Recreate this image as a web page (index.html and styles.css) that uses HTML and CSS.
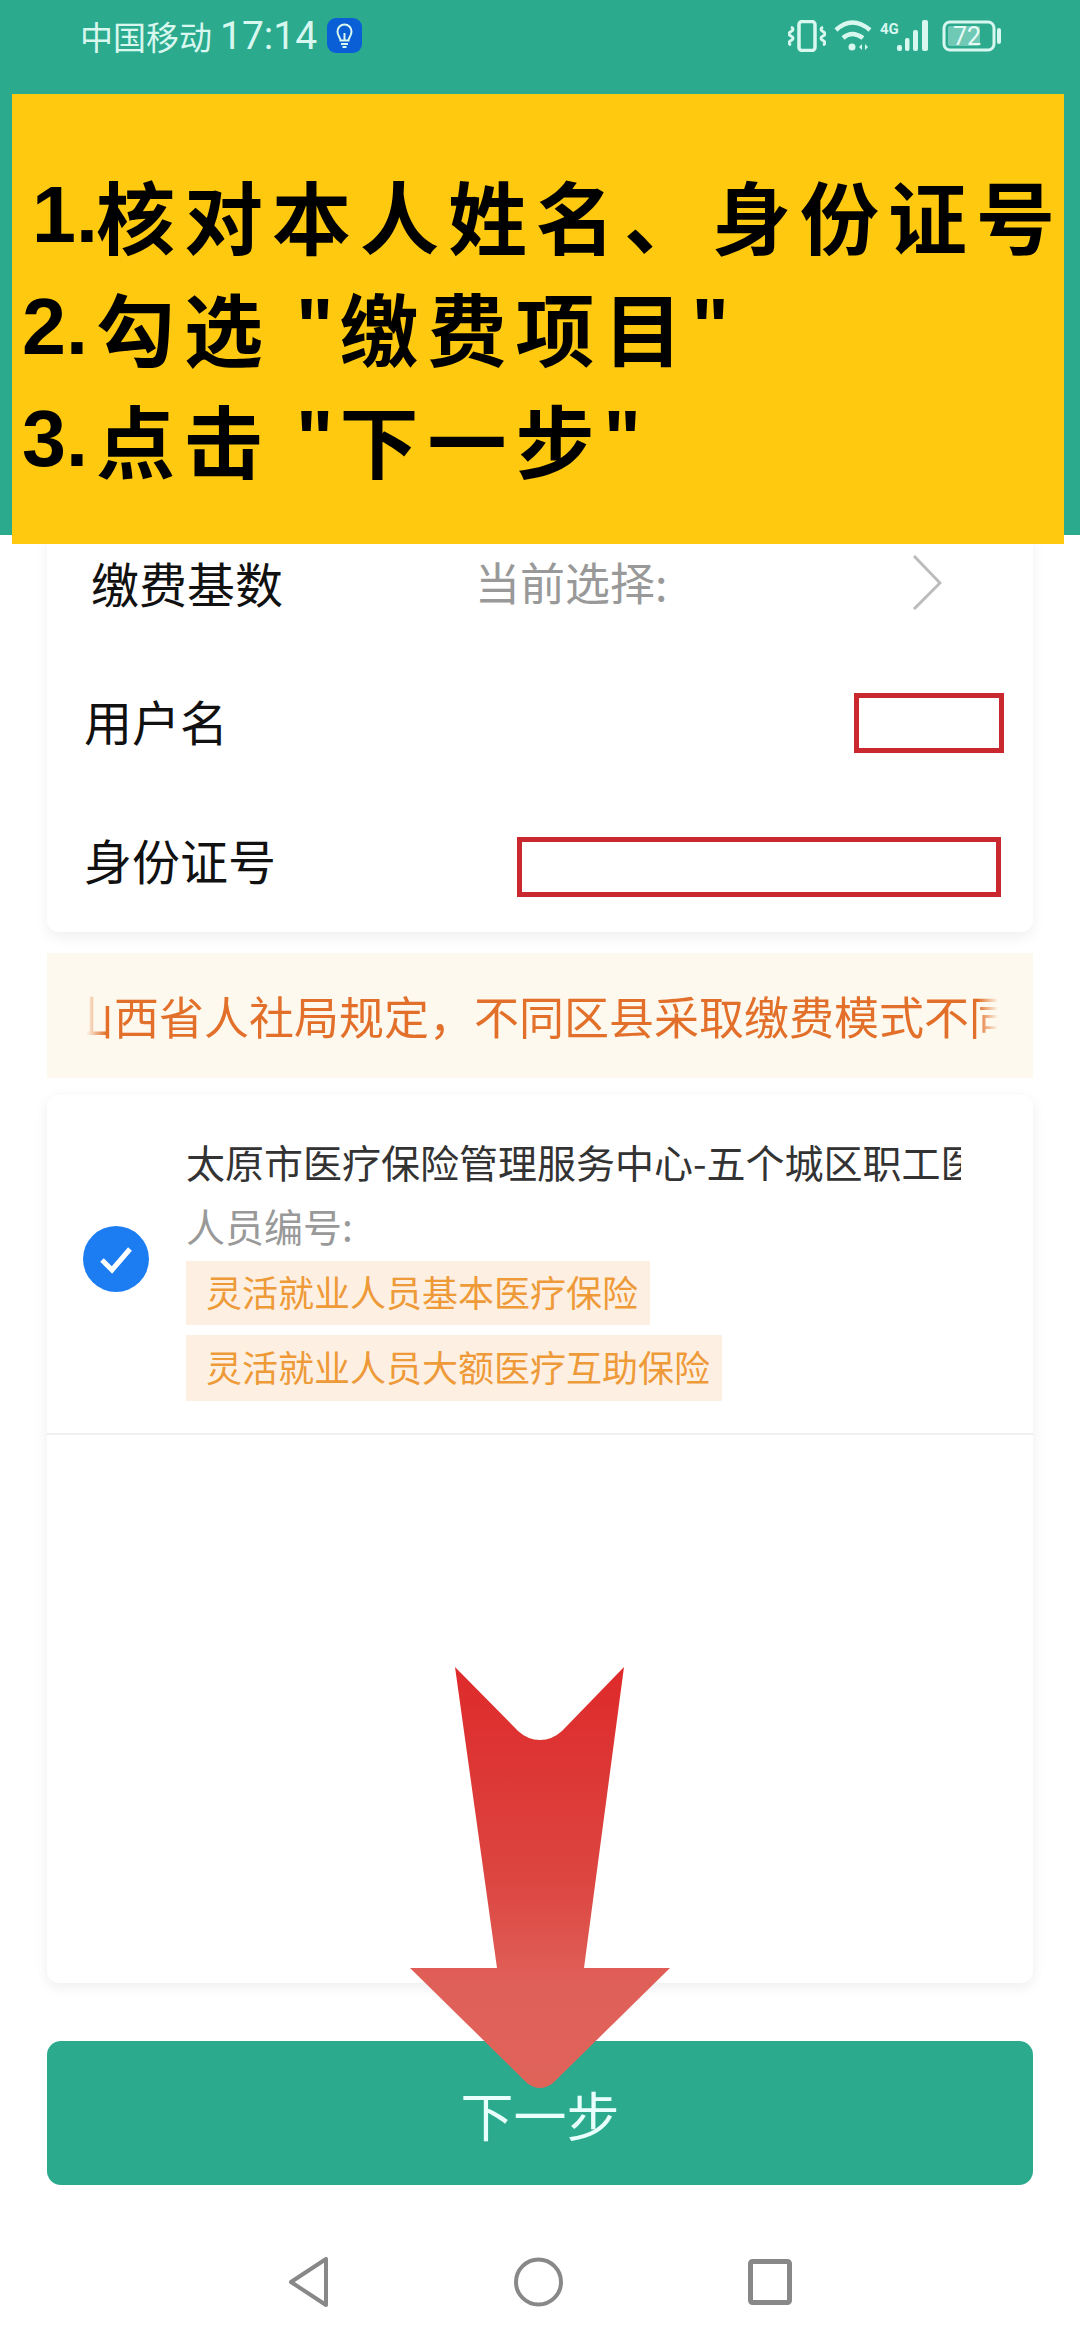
FILE: index.html
```html
<!DOCTYPE html>
<html>
	<head>
		<meta charset="UTF-8">
		<title>缴费</title>
		<link rel="stylesheet" href="styles.css">
	</head>
	<body>
		<div class="page">
			<div class="header">
				<div class="status_bar">
					<div class="status_left">
						<span class="carrier">中国移动</span>
						<span class="clock">17:14</span>
						<svg class="bulb" width="35" height="35" viewBox="0 0 35 35">
							<rect width="35" height="35" rx="9" fill="#0b5fd6"/>
							<path d="M13.5 22.5c0-3-3-4.500-3-9a7 7 0 0 1 14 0c0 4.500-3 6-3 9z" fill="none" stroke="#d8f7ee" stroke-width="2"/>
							<path d="M14 26h7M15.500 29h4M17.500 22v-7" fill="none" stroke="#d8f7ee" stroke-width="2"/>
						</svg>
					</div>
					<div class="status_right">
						<svg width="38" height="32" viewBox="0 0 38 32" fill="none" stroke="#d8f7ee">
							<rect x="11" y="1.500" width="16" height="29" rx="3" stroke-width="3.500"/>
							<path d="M3 7q4 2 0 4.500t0 4.500q4 2 0 4.500t0 4.500M35 7q-4 2 0 4.500t0 4.500q-4 2 0 4.500t0 4.500" stroke-width="3"/>
						</svg>
						<svg width="38" height="32" viewBox="0 0 38 32" fill="none" stroke="#d8f7ee">
							<path d="M2 10q16-15 34 0M9 18q9-8 20 0" stroke-width="4.500"/>
							<circle cx="18" cy="27" r="3.500" fill="#d8f7ee" stroke="none"/>
							<path d="M28 24v6l-3-3zM31 24v6l3-3z" fill="#d8f7ee" stroke="none"/>
						</svg>
						<svg width="50" height="32" viewBox="0 0 50 32" fill="#d8f7ee">
							<text class="net_type" x="0" y="14">4G</text>
							<rect x="17" y="25" width="5" height="6" rx="2"/>
							<rect x="25" y="18" width="4.500" height="13" rx="2"/>
							<rect x="33" y="10" width="5" height="21" rx="2"/>
							<rect x="42" y="0" width="6" height="31" rx="2"/>
						</svg>
						<svg class="battery" width="59" height="32" viewBox="0 0 59 32">
							<rect x="2" y="2" width="50" height="28" rx="6" fill="none" stroke="#d8f7ee" stroke-width="3"/>
							<rect x="6" y="6" width="32" height="20" rx="2" fill="#d8f7ee" opacity=".4"/>
							<rect x="55" y="8" width="4" height="16" rx="2" fill="#d8f7ee"/>
							<text class="battery_num" x="25" y="25" text-anchor="middle">72</text>
						</svg>
					</div>
				</div>
			</div>

			<div class="main">
				<div class="info_card">
					<div class="info_row info_row_base">
						<span class="label">缴费基数</span>
						<span class="current">当前选择:</span>
						<svg class="chevron" width="30" height="55" viewBox="0 0 30 55">
							<path d="M2 1l26 27L2 54" fill="none" stroke="#bcbcbc" stroke-width="3"/>
						</svg>
					</div>
					<div class="info_row info_row_user">
						<span class="label">用户名</span>
						<div class="redact redact_name"></div>
					</div>
					<div class="info_row info_row_id">
						<span class="label">身份证号</span>
						<div class="redact redact_id"></div>
					</div>
				</div>

				<div class="notice">
					<div class="notice_scroll"><span>山西省人社局规定，不同区县采取缴费模式不同</span></div>
				</div>

				<div class="list_card">
					<div class="list_item">
						<svg class="check" width="66" height="66" viewBox="0 0 66 66">
							<circle cx="33" cy="33" r="33" fill="#1c7cf2"/>
							<path d="M19 34l10 10 18-21" fill="none" stroke="#fff" stroke-width="5"/>
						</svg>
						<div class="item_body">
							<div class="item_title">太原市医疗保险管理服务中心-五个城区职工医疗保险</div>
							<div class="item_no">人员编号:</div>
							<div class="tag">灵活就业人员基本医疗保险</div>
							<div class="tag tag_second">灵活就业人员大额医疗互助保险</div>
						</div>
					</div>
				</div>

				<div class="next_btn">下一步</div>
			</div>

			<div class="nav_bar">
				<svg width="41" height="50" viewBox="0 0 41 50" fill="none" stroke="#888" stroke-width="4" stroke-linejoin="round">
					<path d="M38 2v46L3 25z"/>
				</svg>
				<svg width="49" height="50" viewBox="0 0 49 50" fill="none" stroke="#888" stroke-width="4">
					<circle cx="24.500" cy="25" r="22.500"/>
				</svg>
				<svg width="44" height="46" viewBox="0 0 44 46" fill="none" stroke="#888" stroke-width="5" stroke-linejoin="round">
					<rect x="2.500" y="2.500" width="39" height="41" rx="2"/>
				</svg>
			</div>

			<!-- 标注层 -->
			<div class="tips">
				<div class="tips_line"><span class="tips_num tips_num_one">1.</span>核对本人姓名、身份证号</div>
				<div class="tips_line"><span class="tips_num">2.</span>勾选<span class="quote quote_open">"</span>缴费项目<span class="quote">"</span></div>
				<div class="tips_line"><span class="tips_num">3.</span>点击<span class="quote quote_open">"</span>下一步<span class="quote">"</span></div>
			</div>
			<svg class="arrow" width="260" height="425" viewBox="0 0 260 425">
				<defs>
					<linearGradient id="arrow_fill" x1="0" y1="0" x2="0" y2="1">
						<stop offset="0" stop-color="#de2a2b"/>
						<stop offset=".5" stop-color="#dc4540"/>
						<stop offset=".75" stop-color="#df6058"/>
						<stop offset="1" stop-color="#e0635a"/>
					</linearGradient>
				</defs>
				<path d="M45 0L108 64Q118 73 130 73Q142 73 152 64L214 0L174 301L260 301L143 416Q130 426 117 416L0 301L87 301Z" fill="url(#arrow_fill)"/>
			</svg>
		</div>
	</body>
</html>
```

FILE: styles.css
```css
*{
	margin: 0;
	padding: 0;
	box-sizing: border-box;
}
body{
	background-color: #fff;
	font-family: "Noto Sans CJK SC", sans-serif;
}
.page{
	position: relative;
	width: 1080px;
	height: 2340px;
	overflow: hidden;
	background-color: #fff;
}
.header{
	height: 535px;
	background-color: #2baa8e;
}
.status_bar{
	display: flex;
	justify-content: space-between;
	padding: 18px 79px 0 80px;
	color: #d8f7ee;
}
.status_left{
	display: flex;
	align-items: center;
	height: 35px;
}
.carrier{
	font-size: 33px;
	width: 140px;
	white-space: nowrap;
}
.clock{
	width: 107px;
	font-family: "Roboto", sans-serif;
	font-size: 39px;
}
.status_right{
	display: flex;
	gap: 8px;
	padding-top: 2px;
}
.battery{
	margin-left: 4px;
}
.net_type{
	font-family: "Roboto", sans-serif;
	font-size: 15px;
	font-weight: 700;
}
.battery_num{
	font-family: "Roboto", sans-serif;
	font-size: 25px;
	fill: #e6fbf5;
}

.main{
	padding: 0 47px;
}
.info_card{
	height: 397px;
	padding-top: 17px;
	background-color: #fff;
	border-radius: 0 0 12px 12px;
	box-shadow: 0 6px 14px rgba(0,0,0,.06);
}
.info_row{
	display: flex;
	height: 60px;
	padding: 0 29px 0 37px;
	font-size: 48px;
	line-height: 54px;
	color: #111;
}
.info_row_base{
	padding-left: 44px;
	align-items: center;
}
.info_row_user{
	justify-content: space-between;
	margin-top: 81px;
}
.info_row_id{
	justify-content: space-between;
	margin-top: 84px;
	padding-right: 32px;
}
.info_row_id .label{
	line-height: 44px;
}
.current{
	margin-left: 192px;
	width: 244px;
	font-size: 45px;
	color: #999;
	white-space: nowrap;
}
.chevron{
	margin-left: 193px;
}
.redact{
	height: 60px;
	border: 5px solid #c9282f;
}
.redact_name{
	width: 150px;
}
.redact_id{
	width: 484px;
}

.notice{
	height: 125px;
	margin-top: 21px;
	padding: 0 35px 0 39px;
	display: flex;
	align-items: center;
	background-color: #fef9ee;
}
.notice_scroll{
	width: 100%;
	overflow: hidden;
	white-space: nowrap;
	font-size: 45px;
	line-height: 60px;
	color: #e2702b;
	-webkit-mask-image: linear-gradient(to right, transparent 0, #000 20px, #000 calc(100% - 20px), transparent 100%);
	mask-image: linear-gradient(to right, transparent 0, #000 20px, #000 calc(100% - 20px), transparent 100%);
}
.notice_scroll span{
	margin-left: -17px;
}

.list_card{
	height: 888px;
	margin-top: 17px;
	background-color: #fff;
	border-radius: 12px;
	box-shadow: 0 4px 14px rgba(0,0,0,.07);
}
.list_item{
	display: flex;
	height: 340px;
	padding: 38px 0 0 36px;
	border-bottom: 2px solid #f0f0f0;
}
.check{
	flex: none;
	margin-top: 93px;
}
.item_body{
	display: flex;
	flex-direction: column;
	align-items: flex-start;
	margin-left: 37px;
}
.item_title{
	width: 775px;
	height: 56px;
	overflow: hidden;
	white-space: nowrap;
	font-size: 39px;
	line-height: 56px;
	color: #333;
}
.item_no{
	margin-top: 4px;
	font-size: 39px;
	line-height: 64px;
	color: #999;
}
.tag{
	height: 64px;
	margin-top: 4px;
	padding: 0 12px 0 20px;
	font-size: 36px;
	line-height: 61px;
	color: #ee9a38;
	background-color: #fdf0e3;
}
.tag_second{
	height: 66px;
	margin-top: 10px;
	line-height: 63px;
}

.next_btn{
	height: 144px;
	margin-top: 58px;
	font-size: 53px;
	line-height: 146px;
	text-align: center;
	color: #e8fffb;
	background-color: #2baa8e;
	border-radius: 14px;
}

.nav_bar{
	display: flex;
	justify-content: center;
	align-items: center;
	gap: 185px;
	height: 50px;
	margin-top: 72px;
}

/* 标注 */
.tips{
	position: absolute;
	left: 12px;
	top: 94px;
	width: 1052px;
	height: 450px;
	padding-top: 65px;
	background-color: #fec90f;
}
.tips_line{
	display: flex;
	font-size: 79px;
	line-height: 112px;
	font-weight: 700;
	letter-spacing: 9px;
	color: #000;
	white-space: nowrap;
}
.tips_num{
	width: 84px;
	padding-left: 10px;
	font-family: "Liberation Sans", sans-serif;
	letter-spacing: 0;
}
.tips_num_one{
	padding-left: 20px;
}
.quote{
	font-family: "Liberation Sans", sans-serif;
	letter-spacing: 0;
}
.quote_open{
	margin-left: 24px;
	margin-right: 6px;
}
.arrow{
	position: absolute;
	left: 410px;
	top: 1667px;
}
```
